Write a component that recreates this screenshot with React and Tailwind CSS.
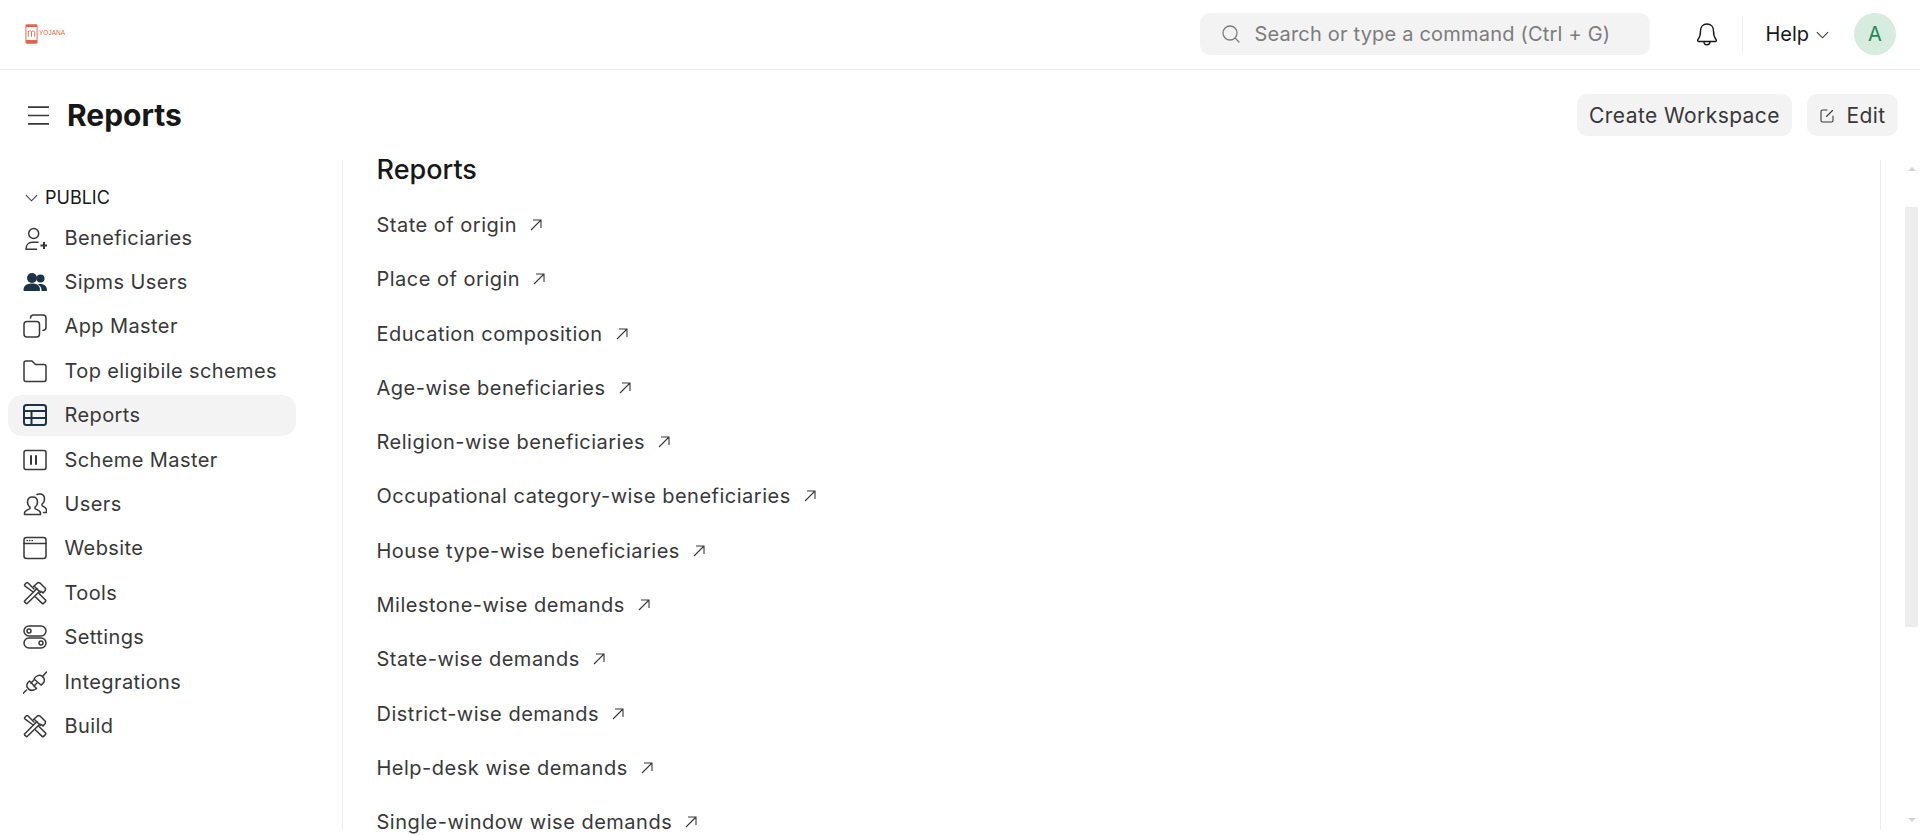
import React from "react";

const S = ({ children, className = "w-6 h-6 text-[#383838]" }) => (
  <svg viewBox="0 0 24 24" fill="none" stroke="currentColor" strokeWidth="1.500" strokeLinecap="round" strokeLinejoin="round" className={className}>{children}</svg>
);

const Tools = () => (
  <S>
    <path d="M9.500 10.500 1.800 4.800a1 1 0 0 1 0-1.400L3.400 1.800a1 1 0 0 1 1.400 0L11 8" />
    <path d="M16 12.500 22.500 19a1 1 0 0 1 0 1.400l-2 2a1 1 0 0 1-1.400 0L12.500 16" />
    <path d="M14 7.500 1.800 19.700a1 1 0 0 0 0 1.400L3 22.300a1 1 0 0 0 1.400 0L17 10" />
    <path d="M10.500 5.500 15 1.500l2 .5 5.500 5.500-.3 2-2.200 2.500-1.500-1.500-1 1-6-6z" />
  </S>
);

const icons = {
  user: (
    <S>
      <circle cx="10.700" cy="7.500" r="5" />
      <path d="M3 23.300h10.500M3 23.300c0-5 3-7 6-7h6" />
      <path d="M21 16v7M17.500 19.500h7" strokeWidth="2" strokeLinecap="butt" />
    </S>
  ),
  sipms: (
    <svg viewBox="0 0 24 24" className="w-6 h-6 text-[#1c3347]" fill="currentColor">
      <circle cx="9" cy="8" r="5" />
      <circle cx="17.500" cy="8.500" r="4" />
      <path d="M0.500 20c0-4.500 3.500-6.500 8.500-6.500s8 2 8 6.500c0 .6-.4 1-1 1H1.500c-.6 0-1-.4-1-1z" />
      <path d="M18.500 21h4.500c.6 0 1-.4 1-1 0-3.800-2.800-6-6.500-6-1 0-1.800.1-2.600.4 2.200 1.200 3.600 3.200 3.600 5.600 0 .4 0 .7 0 1z" />
    </svg>
  ),
  app: (
    <S>
      <rect x="1" y="7.500" width="15.500" height="15.500" rx="3" />
      <path d="M7.500 4c0-1.700 1.200-3 3-3H20c1.700 0 3 1.300 3 3v9.500c0 1.700-1.200 2.700-3 3" />
    </S>
  ),
  folder: (
    <S>
      <path d="M1 4c0-1.200.8-2 2-2h6l3.500 3.500H21c1.200 0 2 .8 2 2V20.500c0 1.200-.8 2-2 2H3c-1.200 0-2-.8-2-2z" />
    </S>
  ),
  table: (
    <svg viewBox="0 0 24 24" fill="none" stroke="currentColor" strokeWidth="2" className="w-6 h-6 text-[#1c3347]">
      <rect x="1" y="2" width="22" height="20" rx="2.500" />
      <path d="M1 8h22M1 15h22M8.500 8v14" />
    </svg>
  ),
  scheme: (
    <S>
      <rect x="1" y="2.500" width="22" height="19" rx="2" />
      <path d="M8 8v8M13 8v8" strokeWidth="2" />
    </S>
  ),
  users: (
    <S>
      <path d="M9.500 5c-3 0-5 2-5 5 0 2.500 1 4 2.500 5v1.500c0 .8-5.500 1.500-5.500 4.500v1.500h16V21c0-3-5.500-3.700-5.500-4.500V15c1.500-1 2.500-2.500 2.500-5 0-3-2-5-5-5z" />
      <path d="M14 2.500c1-.5 1.500-.5 2.500-.5 3 0 5 2 5 5 0 2.500-1 4-2.500 5v1.500c0 .8 4.500 1.500 4.500 4.500v2.500h-3" />
    </S>
  ),
  web: (
    <S>
      <rect x="1" y="1.500" width="22" height="21" rx="2.500" />
      <path d="M1 7.500h22" />
      <path d="M4 4.500h.4M6.500 4.500h.4M9 4.500h.4" strokeWidth="1.300" />
    </S>
  ),
  tools: <Tools />,
  settings: (
    <S>
      <rect x="1" y="1" width="22" height="10" rx="5" />
      <rect x="1" y="13" width="22" height="10" rx="5" />
      <circle cx="6" cy="6" r="2" />
      <circle cx="18" cy="18" r="2" />
    </S>
  ),
  plug: (
    <S>
      <path d="m11 9 7 6c2.500-1.500 4-4 3-6.500l-2-2.500c-2.500-1.500-6-.5-8 3z" />
      <path d="m20 6 3.500-4" />
      <path d="m6.500 11 7 7.500c-2.500 2-5 2.500-7.500 1l-2-2.500c-.5-2.200.5-4.500 2.500-6z" />
      <path d="m8 13 3-3M11 16l3-3" />
      <path d="M3.500 20 0 23.500" />
    </S>
  ),
};

const side = [
  ["Beneficiaries", "user"],
  ["Sipms Users", "sipms"],
  ["App Master", "app"],
  ["Top eligibile schemes", "folder"],
  ["Reports", "table", true],
  ["Scheme Master", "scheme"],
  ["Users", "users"],
  ["Website", "web"],
  ["Tools", "tools"],
  ["Settings", "settings"],
  ["Integrations", "plug"],
  ["Build", "tools"],
];

const links = [
  "State of origin",
  "Place of origin",
  "Education composition",
  "Age-wise beneficiaries",
  "Religion-wise beneficiaries",
  "Occupational category-wise beneficiaries",
  "House type-wise beneficiaries",
  "Milestone-wise demands",
  "State-wise demands",
  "District-wise demands",
  "Help-desk wise demands",
  "Single-window wise demands",
];

export default function App() {
  return (
    <div className="h-[835px] overflow-hidden bg-white flex flex-col text-[#383838] font-['Inter',sans-serif]">
      <header className="h-[70px] shrink-0 border-b border-[#ededed] flex items-center pl-[25px] pr-[24px] pb-[1px]">
        <div className="flex items-center">
          <svg viewBox="0 0 14 22" className="w-[13px] h-[22px]" fill="none">
            <rect x="0.500" y="0.500" width="13" height="21" rx="1.500" fill="#e2634a" />
            <rect x="1.500" y="3.500" width="11" height="14" fill="#fff" />
            <path d="M3.500 14V7.500M3.500 8.500c2-1.500 3.500-1 3.500 1V14M7 9.500c0-2 3.500-2.500 3.500 0V14" stroke="#e2634a" strokeWidth="1" />
          </svg>
          <span className="text-[6.500px] leading-none text-[#e2634a] ml-[1px] mb-[2px] font-['Liberation_Sans',sans-serif]">YOJANA</span>
        </div>
        <div className="ml-auto w-[450px] h-[42px] rounded-[10px] bg-[#f3f3f3] flex items-center pl-[21px] text-[#7c7c7c]">
          <svg viewBox="0 0 20 20" fill="none" stroke="currentColor" strokeWidth="1.300" strokeLinecap="round" className="w-5 h-5 shrink-0">
            <circle cx="9" cy="9" r="7" />
            <path d="m14.500 14.500 3.500 3.500" />
          </svg>
          <span className="ml-[13px] text-[20px] tracking-[0.01em] whitespace-nowrap">Search or type a command (Ctrl + G)</span>
        </div>
        <div className="ml-[46px] w-[22px] flex justify-center text-[#171717]">
          <svg viewBox="0 0 22 24" fill="none" stroke="currentColor" strokeWidth="1.400" strokeLinejoin="round" className="w-[22px] h-6">
            <path d="M11 2C7 2 4.500 5 4.500 9c0 3.500-.5 6-2.500 8.500-.8 1-.3 2 1 2h16c1.300 0 1.800-1 1-2C18 15 17.500 12.500 17.500 9c0-4-2.500-7-6.500-7z" />
            <path d="M8 19.500c0 2 1.300 3.300 3 3.300s3-1.300 3-3.300" />
          </svg>
        </div>
        <div className="ml-[24px] w-px h-[36px] bg-[#ededed]" />
        <span className="ml-[22px] text-[20px] text-[#171717]">Help</span>
        <svg viewBox="0 0 14 8" fill="none" stroke="#383838" strokeWidth="1.200" className="ml-[7px] w-[13px] h-[8px] mt-[2px]">
          <path d="m1 1 6 6 6-6" />
        </svg>
        <div className="ml-[25px] w-[42px] h-[42px] rounded-full bg-[#d6ecdf] flex items-center justify-center text-[20px] text-[#1d8a52]">A</div>
      </header>

      <div className="h-[90px] shrink-0 flex items-center pl-[28px] pr-[22px]">
        <svg viewBox="0 0 20 20" fill="none" stroke="#383838" strokeWidth="1.500" className="w-[21px] h-[21px]">
          <path d="M0 2h20M0 10h20M0 18h20" />
        </svg>
        <h1 className="ml-[18px] text-[30px] font-bold text-[#171717] leading-none">Reports</h1>
        <button className="ml-auto h-[42px] w-[215px] pt-[1px] rounded-[10px] bg-[#f3f3f3] text-[21px] tracking-[0.02em] text-[#383838]">Create Workspace</button>
        <button className="ml-[15px] h-[42px] w-[91px] pt-[1px] rounded-[10px] bg-[#f3f3f3] flex items-center justify-center gap-[11px] text-[21px] tracking-[0.02em] text-[#383838]">
          <svg viewBox="0 0 16 16" fill="none" stroke="currentColor" strokeWidth="1.100" strokeLinecap="round" className="w-4 h-4">
            <path d="M8 2H3.500C2.500 2 2 2.500 2 3.500v9c0 1 .5 1.500 1.500 1.500h9c1 0 1.500-.5 1.500-1.500V8" />
            <path d="m13.500 2.500-6 6" />
          </svg>
          Edit
        </button>
      </div>

      <div className="flex-1 min-h-0 flex">
        <aside className="w-[343px] shrink-0 mb-[5px] border-r border-[#ededed] pt-[25px] pl-[8px]">
          <div className="flex items-center h-[24px] pl-[17px] mb-[8px]">
            <svg viewBox="0 0 14 8" fill="none" stroke="#383838" strokeWidth="1.100" className="w-[13px] h-[8px] mt-[2px]">
              <path d="m1 1 6 6 6-6" />
            </svg>
            <span className="ml-[7px] text-[18px] text-[#171717]">PUBLIC</span>
          </div>
          <nav className="w-[288px] flex flex-col">
            {side.map(([label, icon, active]) => (
              <div key={label} className={`h-[41px] mb-[3.420px] pl-[15px] flex items-center gap-[17.500px] rounded-[14px] ${active ? "bg-[#f3f3f3]" : ""}`}>
                {icons[icon]}
                <span className="text-[20px] tracking-[0.02em] whitespace-nowrap text-[#383838]">{label}</span>
              </div>
            ))}
          </nav>
        </aside>

        <main className="w-[1538px] shrink-0 mb-[5px] border-r border-[#ededed] pl-[33.500px]">
          <h2 className="text-[27px] font-medium leading-[32px] text-[#171717] mt-[-6px]">Reports</h2>
          <ul className="mt-[12px] flex flex-col">
            {links.map((l) => (
              <li key={l} className="h-[54.270px] flex items-center text-[20px] tracking-[0.025em] text-[#383838] whitespace-nowrap">
                {l}
                <svg viewBox="0 0 14 14" fill="none" stroke="#383838" strokeWidth="1.100" className="ml-[12px] w-[14px] h-[14px]">
                  <path d="M2 12 12 2M4 2h8v8" />
                </svg>
              </li>
            ))}
          </ul>
        </main>

        <div className="flex-1 flex flex-col items-center pl-[22px] pt-[7px] pb-[13px]">
          <svg viewBox="0 0 8 4" className="w-2 h-1 shrink-0" fill="#d4d4d4"><path d="M4 0 8 4H0z" /></svg>
          <div className="mt-[36px] w-[13px] h-[420px] bg-[#ededed]" />
          <svg viewBox="0 0 8 4" className="mt-auto w-2 h-1 shrink-0" fill="#d4d4d4"><path d="M4 4 8 0H0z" /></svg>
        </div>
      </div>
    </div>
  );
}
